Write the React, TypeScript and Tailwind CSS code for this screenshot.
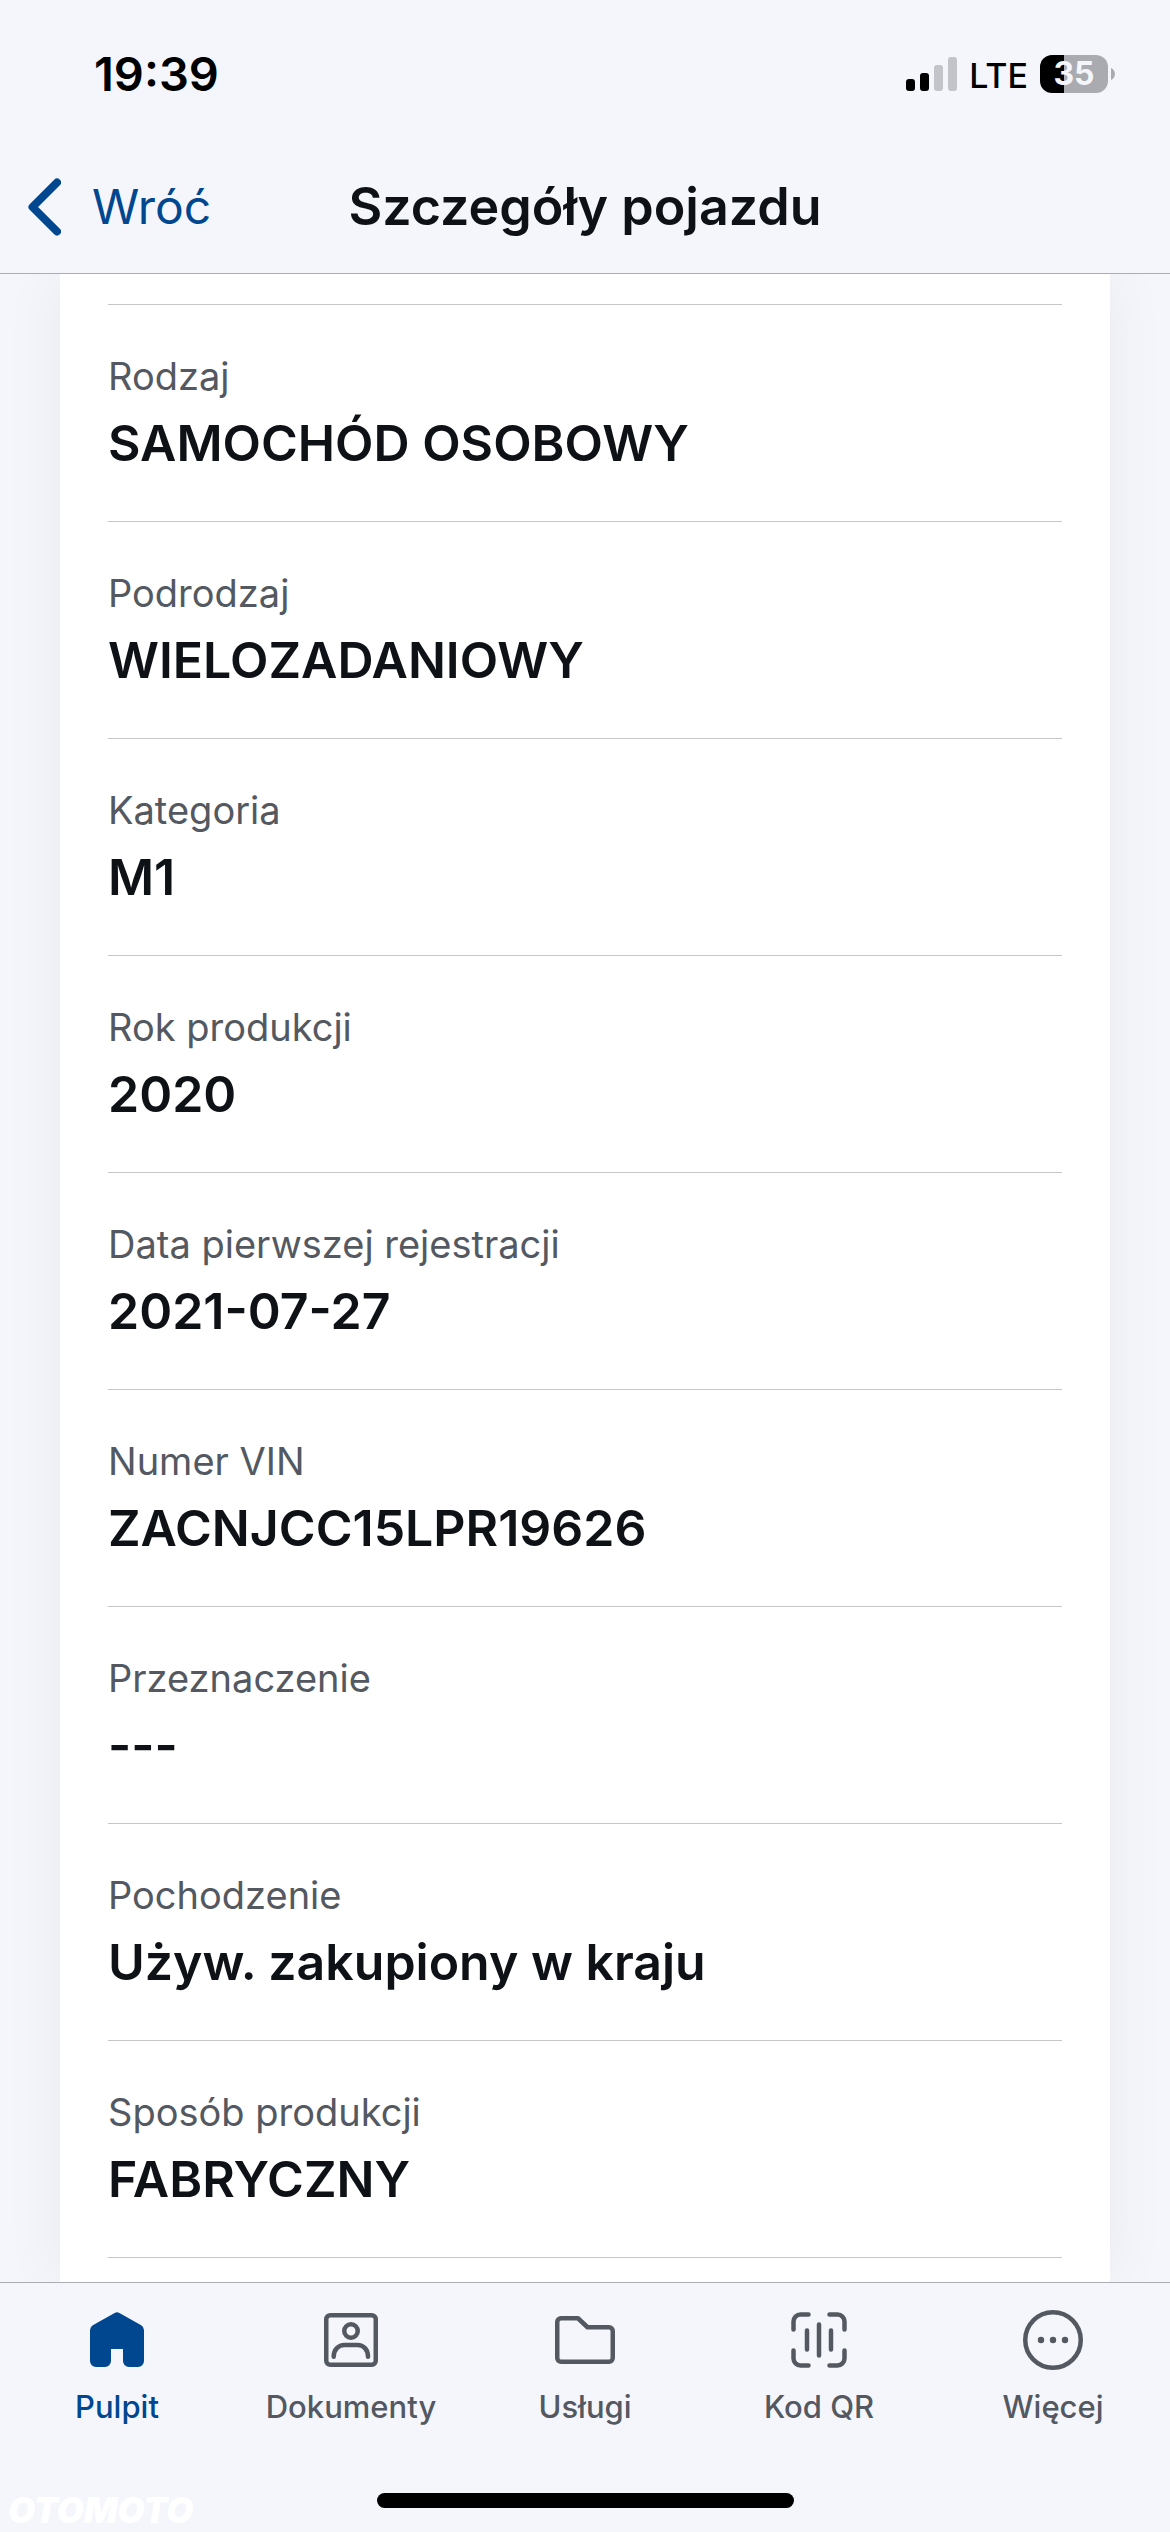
import type { ReactNode } from 'react';

const details = [
  { label: 'Rodzaj', value: 'SAMOCHÓD OSOBOWY' },
  { label: 'Podrodzaj', value: 'WIELOZADANIOWY' },
  { label: 'Kategoria', value: 'M1' },
  { label: 'Rok produkcji', value: '2020' },
  { label: 'Data pierwszej rejestracji', value: '2021-07-27' },
  { label: 'Numer VIN', value: 'ZACNJCC15LPR19626' },
  { label: 'Przeznaczenie', value: '---' },
  { label: 'Pochodzenie', value: 'Używ. zakupiony w kraju' },
  { label: 'Sposób produkcji', value: 'FABRYCZNY' },
];

function Icon({ children }: { children: ReactNode }) {
  return (
    <svg
      viewBox="0 0 60 60"
      className="size-15"
      fill="none"
      stroke="currentColor"
      strokeWidth="4.5"
      strokeLinecap="round"
      strokeLinejoin="round"
      aria-hidden="true"
    >
      {children}
    </svg>
  );
}

const tabs = [
  {
    name: 'Pulpit',
    active: true,
    icon: (
      <Icon>
        <path
          fill="currentColor"
          stroke="none"
          d="M27.6 2.9a4.6 4.6 0 0 1 4.8 0L54.2 15.2a5.6 5.6 0 0 1 2.8 4.900V51a6 6 0 0 1-6 6h-9a6 6 0 0 1-6-6V39H24v12a6 6 0 0 1-6 6H9a6 6 0 0 1-6-6V20.100a5.600 5.600 0 0 1 2.800-4.900Z"
        />
      </Icon>
    ),
  },
  {
    name: 'Dokumenty',
    active: false,
    icon: (
      <Icon>
        <rect x="5.250" y="5.250" width="49.500" height="49.500" rx="4" />
        <circle cx="30" cy="21" r="6.750" />
        <path d="M12.700 46.700C12.700 39.500 17.500 35 23.500 35h13C42.500 35 47 39.500 47 46.700" />
      </Icon>
    ),
  },
  {
    name: 'Usługi',
    active: false,
    icon: (
      <Icon>
        <path d="M2.250 12a3.750 3.750 0 0 1 3.750-3.750h17L32.500 17.250H54A3.750 3.750 0 0 1 57.750 21v27A3.750 3.750 0 0 1 54 51.750H6A3.750 3.750 0 0 1 2.250 48Z" />
      </Icon>
    ),
  },
  {
    name: 'Kod QR',
    active: false,
    icon: (
      <Icon>
        <path d="M19.500 4.500H11.500a7 7 0 0 0-7 7V19.500M40.500 4.500h8a7 7 0 0 1 7 7V19.500M4.500 40.500v8a7 7 0 0 0 7 7h8M55.500 40.500v8a7 7 0 0 1-7 7h-8M18 20.500v19M30 14.500v31M42 20.500v19" />
      </Icon>
    ),
  },
  {
    name: 'Więcej',
    active: false,
    icon: (
      <Icon>
        <circle cx="30" cy="30" r="27.750" />
        <g fill="currentColor" stroke="none">
          <circle cx="18" cy="30" r="3.200" />
          <circle cx="30" cy="30" r="3.200" />
          <circle cx="42" cy="30" r="3.200" />
        </g>
      </Icon>
    ),
  },
];

function StatusBar() {
  return (
    <div className="flex h-[148px] items-center justify-between pr-[55px] pl-[94px] text-black">
      <time className="text-[47px] leading-[56px] font-semibold">19:39</time>
      <div className="flex items-center">
        <svg viewBox="0 0 51 34" className="h-[34px] w-[51px]" aria-label="Sygnał">
          <rect x="0" y="22" width="9" height="12" rx="3" />
          <rect x="14" y="16" width="9" height="18" rx="3" />
          <rect x="28" y="8" width="9" height="26" rx="3" fill="#c3c4c9" />
          <rect x="42" y="0" width="9" height="34" rx="3" fill="#c3c4c9" />
        </svg>
        <span className="mr-3 ml-3 pt-1 text-[34px] leading-10 font-medium">LTE</span>
        <div className="flex items-center gap-[3px]">
          <div className="flex h-[38px] w-[68px] items-center justify-center rounded-[12px] bg-linear-to-r from-black from-35% to-[#a9abb0] to-35% text-[32px] leading-[38px] font-bold text-[#f4f6fc]">
            35
          </div>
          <svg viewBox="0 0 4 12" className="h-3 w-1" fill="#a9abb0" aria-hidden="true">
            <path d="M0 0C2.500 1 4 3.500 4 6S2.500 11 0 12Z" />
          </svg>
        </div>
      </div>
    </div>
  );
}

export default function App() {
  return (
    <div className="flex h-screen flex-col overflow-hidden bg-[#f4f6fc] font-['Inter',sans-serif] text-[#0e1116]">
      <header className="shrink-0 border-b border-[#acadb2]">
        <StatusBar />
        <div className="grid h-[125px] grid-cols-[1fr_auto_1fr] items-center pb-[7px]">
          <button type="button" className="flex items-center gap-[31px] justify-self-start pl-7 text-[48px] leading-[60px] text-[#00478f]">
            <svg
              viewBox="0 0 33 58"
              className="h-[58px] w-[33px]"
              fill="none"
              stroke="currentColor"
              strokeWidth="8"
              strokeLinecap="round"
              strokeLinejoin="round"
              aria-hidden="true"
            >
              <path d="M29 4.500 4.500 29 29 53.500" />
            </svg>
            Wróć
          </button>
          <h1 className="text-[52px] leading-[60px] font-semibold">Szczegóły pojazdu</h1>
        </div>
      </header>

      <main className="min-h-0 flex-1 overflow-hidden px-15">
        <div className="min-h-full bg-white px-12 pt-[30px] shadow-[0_0_60px_rgba(0,0,0,0.055)]">
          <dl className="border-t border-[#c6c6c8]">
            {details.map((item) => (
              <div key={item.label} className="flex flex-col gap-[14px] border-b border-[#c6c6c8] py-12">
                <dt className="text-[38px] leading-[46px] text-[#535861]">{item.label}</dt>
                <dd className="text-[50px] leading-[60px] font-semibold">{item.value}</dd>
              </div>
            ))}
          </dl>
          <div className="h-6" />
        </div>
      </main>

      <footer className="relative z-10 shrink-0 border-t border-[#acadb2] bg-[#f4f6fc]">
        <nav className="grid grid-cols-5 pt-[27px]">
          {tabs.map((tab) => (
            <a
              key={tab.name}
              href="#"
              aria-current={tab.active ? 'page' : undefined}
              className={
                tab.active
                  ? 'flex flex-col items-center gap-5 text-[#00478f]'
                  : 'flex flex-col items-center gap-5 text-[#535861]'
              }
            >
              {tab.icon}
              <span className="text-[31px] leading-[34px] font-medium">{tab.name}</span>
            </a>
          ))}
        </nav>
        <div className="mx-auto mt-[69px] mb-6 h-[15px] w-[417px] rounded-full bg-black" />
        <span className="absolute bottom-1 left-2 text-[35px] leading-9 font-black text-white italic">OTOMOTO</span>
      </footer>
    </div>
  );
}
